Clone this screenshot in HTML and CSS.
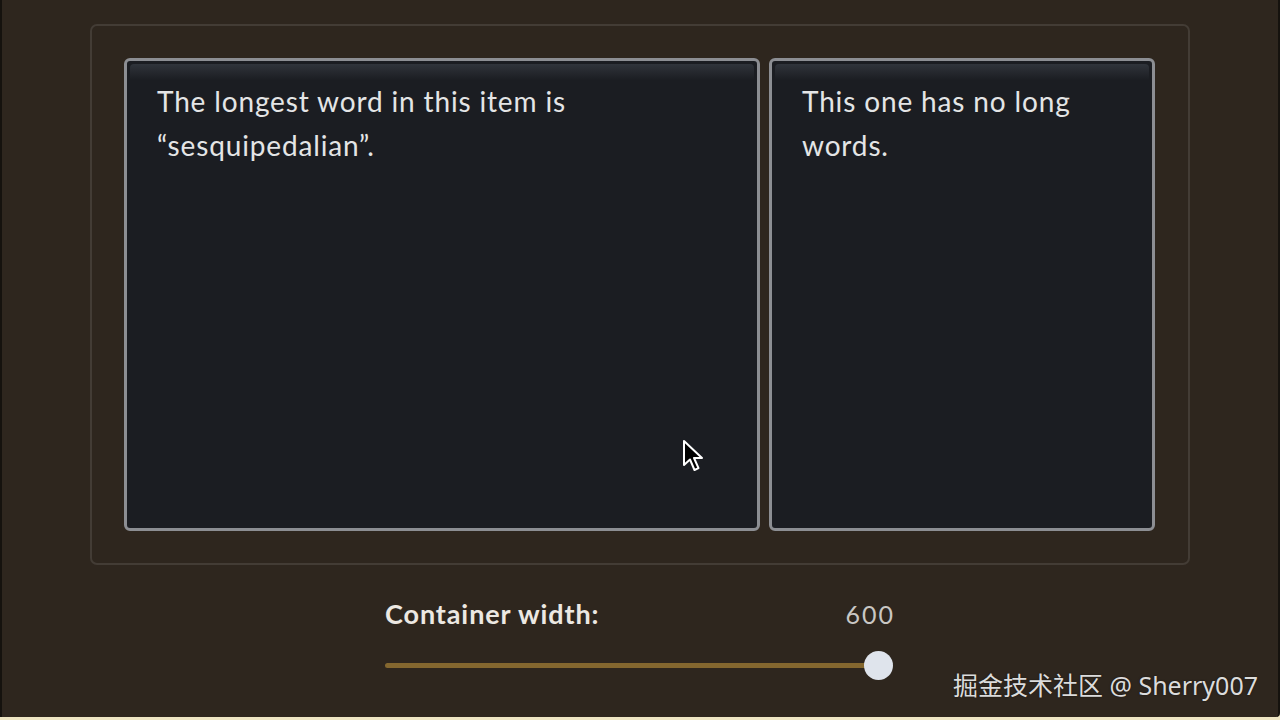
FILE: index.html
```html
<!DOCTYPE html>
<html>
<head>
<meta charset="utf-8">
<link rel="stylesheet" href="styles.css">
</head>
<body>
<div class="screen">
  <div class="demo">
    <div class="outer">
      <div class="card card-wide">
        <p>The longest word in this item is “sesquipedalian”.</p>
      </div>
      <div class="card card-narrow">
        <p>This one has no long words.</p>
      </div>
    </div>
    <div class="controls">
      <div class="label-row">
        <span class="label">Container width:</span>
        <span class="value">600</span>
      </div>
      <div class="slider">
        <div class="track"></div>
        <div class="thumb"></div>
      </div>
    </div>
  </div>
  <svg class="cursor" width="24" height="34" viewBox="0 0 24 34">
    <path d="M2 2 L2 26 L8 20.5 L12.5 31 L16.5 29.2 L12 19 L20 19 Z" fill="#000" stroke="#fff" stroke-width="2" stroke-linejoin="round"/>
  </svg>
  <div class="watermark">掘金技术社区 @ Sherry007</div>
</div>
</body>
</html>
```
FILE: styles.css
```css
* { box-sizing: border-box; }
html, body { margin: 0; padding: 0; }
body {
  width: 1280px;
  height: 720px;
  overflow: hidden;
  background: #efe6c4;
  font-family: Lato, "Noto Sans", sans-serif;
}
.screen {
  position: relative;
  width: 1280px;
  height: 717px;
  background: #2e261e;
  border-left: 2px solid #15120e;
  border-right: 2px solid #15120e;
  border-bottom-right-radius: 4px;
  padding-top: 24px;
}
.demo {
  display: flex;
  flex-direction: column;
  align-items: center;
}
.outer {
  width: 1100px;
  height: 541px;
  border: 2px solid #433c35;
  border-radius: 7px;
  padding: 32px;
  display: flex;
  gap: 9px;
}
.card {
  position: relative;
  background: #1b1d22;
  border: 3px solid #8c8e93;
  border-radius: 6px;
  padding: 18px 30px;
}
.card::before {
  content: "";
  position: absolute;
  left: 3px;
  right: 3px;
  top: 3px;
  height: 16px;
  border-radius: 4px 4px 0 0;
  background: linear-gradient(#30343b, #1b1d22);
}
.card-wide { width: 636px; }
.card-narrow { width: 386px; }
.card p {
  position: relative;
  margin: 0;
  color: #e4e5e6;
  font-size: 28px;
  line-height: 44px;
  letter-spacing: 0.85px;
}
.controls {
  width: 510px;
  margin-top: 32px;
}
.label-row {
  display: flex;
  justify-content: space-between;
  align-items: baseline;
}
.label {
  color: #ece8e2;
  font-size: 27px;
  font-weight: 700;
  letter-spacing: 0.9px;
}
.value {
  color: #c9c7c4;
  font-size: 25px;
  letter-spacing: 2px;
}
.slider {
  position: relative;
  height: 30px;
  margin-top: 20px;
  display: flex;
  align-items: center;
}
.track {
  width: 494px;
  height: 5px;
  border-radius: 3px;
  background: #84672f;
}
.thumb {
  position: absolute;
  left: 479px;
  top: 1px;
  width: 29px;
  height: 29px;
  border-radius: 50%;
  background: #dfe4ec;
}
.cursor {
  position: absolute;
  left: 680px;
  top: 439px;
}
.watermark {
  position: absolute;
  right: 20px;
  top: 666px;
  color: #dcdcdc;
  font-family: "Noto Sans", "Noto Sans CJK SC", sans-serif;
  font-size: 25px;
  text-shadow: 0 0 2px rgba(0,0,0,0.5);
}
```
